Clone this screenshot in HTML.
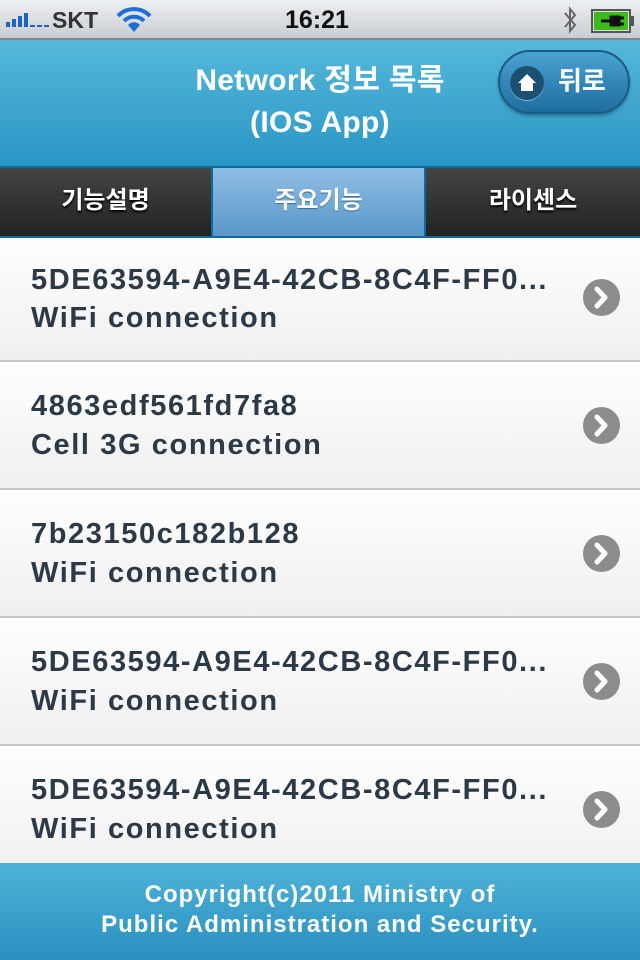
<!DOCTYPE html>
<html><head><meta charset="utf-8"><style>
*{margin:0;padding:0;box-sizing:border-box}
body{width:640px;height:960px;overflow:hidden;font-family:"Liberation Sans","Noto Sans CJK KR",sans-serif;background:#fff;position:relative}
.sb{position:absolute;top:0;left:0;width:640px;height:40px;background:linear-gradient(#eef0f2,#c9cdd1);border-bottom:2px solid #7d8890}
.sb div{position:absolute;font-weight:bold;color:#111}
.hd{position:absolute;top:40px;left:0;width:640px;height:126px;background:linear-gradient(#55b8da,#2a96c6)}
.ttl{position:absolute;top:20px;left:130px;width:380px;text-align:center;color:#fff;font-weight:bold;font-size:30px;line-height:42px;letter-spacing:0.3px}
.back{position:absolute;left:498px;top:10px;width:132px;height:64px;border-radius:32px;background:linear-gradient(#4aa3d3,#1e6d9f);border:2px solid #1b5a82;box-shadow:0 2px 3px rgba(0,0,0,.3)}
.back .ic{position:absolute;left:10px;top:14px;width:34px;height:34px;border-radius:17px;background:#1c4f70;box-shadow:0 1px 0 #6fb7de}
.back span{position:absolute;left:58px;top:9px;color:#fff;font-weight:bold;font-size:26px}
.tabs{position:absolute;top:166px;left:0;width:640px;height:72px;background:#0c6b99}
.tab{position:absolute;top:2px;height:68px;background:linear-gradient(#444,#222);color:#fff;font-weight:bold;font-size:24px;text-align:center;line-height:66px;text-shadow:0 2px 2px #000}
.tab.on{background:linear-gradient(#8ebde5,#5a98c9);text-shadow:0 1px 1px #3a6a90}
.row{position:absolute;left:0;width:640px;background:linear-gradient(#fff,#efefef);border-bottom:2px solid #c8c8c8}
.row p{position:absolute;left:31px;font-weight:bold;font-size:29px;letter-spacing:1.6px;color:#2b3a46;white-space:nowrap}
.chev{position:absolute;left:583px;width:37px;height:37px;border-radius:50%;background:#8c8c8c}
.ft{position:absolute;top:863px;left:0;width:640px;height:97px;background:linear-gradient(#4fb3d8,#2a8fc0);color:#fff;font-weight:bold;font-size:24px;letter-spacing:1px;text-align:center;line-height:30px;padding-top:17px}
</style></head><body>
<div class="sb">
 <div style="left:6px;top:12px"><svg width="44" height="16"><rect x="0" y="10" width="4" height="5" fill="#1d63c4"/><rect x="6" y="7" width="4" height="8" fill="#1d63c4"/><rect x="12" y="4" width="4" height="11" fill="#1d63c4"/><rect x="18" y="1" width="4" height="14" fill="#1d63c4"/><rect x="24" y="13" width="5" height="2" fill="#1d63c4"/><rect x="31" y="13" width="5" height="2" fill="#1d63c4"/><rect x="38" y="13" width="5" height="2" fill="#1d63c4"/></svg></div>
 <div style="left:52px;top:7px;font-size:23px;color:#333">SKT</div>
 <div style="left:116px;top:7px"><svg width="36" height="26" viewBox="0 0 36 26"><path d="M2 9 A22 22 0 0 1 34 9" stroke="#1d6fd6" stroke-width="4" fill="none"/><path d="M8 14 A14 14 0 0 1 28 14" stroke="#1d6fd6" stroke-width="4" fill="none"/><path d="M18 25 L12 18 A8 8 0 0 1 24 18Z" fill="#1d6fd6"/></svg></div>
 <div style="left:285px;top:6px;font-size:25px">16:21</div>
 <div style="left:560px;top:4px"><svg width="20" height="32"><path d="M5 9 L15 21 L10 27 L10 5 L15 11 L5 23" stroke="#666" stroke-width="2" fill="none"/></svg></div>
 <div style="left:591px;top:9px"><svg width="44" height="24"><rect x="1" y="1" width="38" height="22" fill="#ddd" stroke="#555" stroke-width="2"/><rect x="3" y="3" width="34" height="18" fill="#3dbb1a"/><rect x="39" y="7" width="4" height="10" fill="#555"/><path d="M10 12 H20 M20 8 H28 V16 H20Z M28 9 H33 M28 15 H33" stroke="#111" stroke-width="3" fill="#111"/></svg></div>
</div>
<div class="hd">
 <div class="ttl">Network 정보 목록<br>(IOS App)</div>
 <div class="back"><div class="ic"><svg width="34" height="34"><path d="M17 8 L26 17 H23 V25 H11 V17 H8Z" fill="#fff"/></svg></div><span>뒤로</span></div>
</div>
<div class="tabs">
 <div class="tab" style="left:0;width:211px">기능설명</div>
 <div class="tab on" style="left:213px;width:211px">주요기능</div>
 <div class="tab" style="left:426px;width:214px">라이센스</div>
</div>
<div class="row" style="top:238px;height:124px"><p style="top:26px">5DE63594-A9E4-42CB-8C4F-FF0...</p><p style="top:64px">WiFi connection</p><div class="chev" style="top:41px"><svg width="37" height="37"><path d="M14 10 L22 18.5 L14 27" stroke="#fff" stroke-width="5" fill="none" stroke-linecap="round" stroke-linejoin="round"/></svg></div></div>
<div class="row" style="top:362px;height:128px"><p style="top:28px">4863edf561fd7fa8</p><p style="top:67px">Cell 3G connection</p><div class="chev" style="top:45px"><svg width="37" height="37"><path d="M14 10 L22 18.5 L14 27" stroke="#fff" stroke-width="5" fill="none" stroke-linecap="round" stroke-linejoin="round"/></svg></div></div>
<div class="row" style="top:490px;height:128px"><p style="top:28px">7b23150c182b128</p><p style="top:67px">WiFi connection</p><div class="chev" style="top:45px"><svg width="37" height="37"><path d="M14 10 L22 18.5 L14 27" stroke="#fff" stroke-width="5" fill="none" stroke-linecap="round" stroke-linejoin="round"/></svg></div></div>
<div class="row" style="top:618px;height:128px"><p style="top:28px">5DE63594-A9E4-42CB-8C4F-FF0...</p><p style="top:67px">WiFi connection</p><div class="chev" style="top:45px"><svg width="37" height="37"><path d="M14 10 L22 18.5 L14 27" stroke="#fff" stroke-width="5" fill="none" stroke-linecap="round" stroke-linejoin="round"/></svg></div></div>
<div class="row" style="top:746px;height:128px;border:none"><p style="top:28px">5DE63594-A9E4-42CB-8C4F-FF0...</p><p style="top:67px">WiFi connection</p><div class="chev" style="top:45px"><svg width="37" height="37"><path d="M14 10 L22 18.5 L14 27" stroke="#fff" stroke-width="5" fill="none" stroke-linecap="round" stroke-linejoin="round"/></svg></div></div>
<div class="ft">Copyright(c)2011 Ministry of<br>Public Administration and Security.</div>
</body></html>
